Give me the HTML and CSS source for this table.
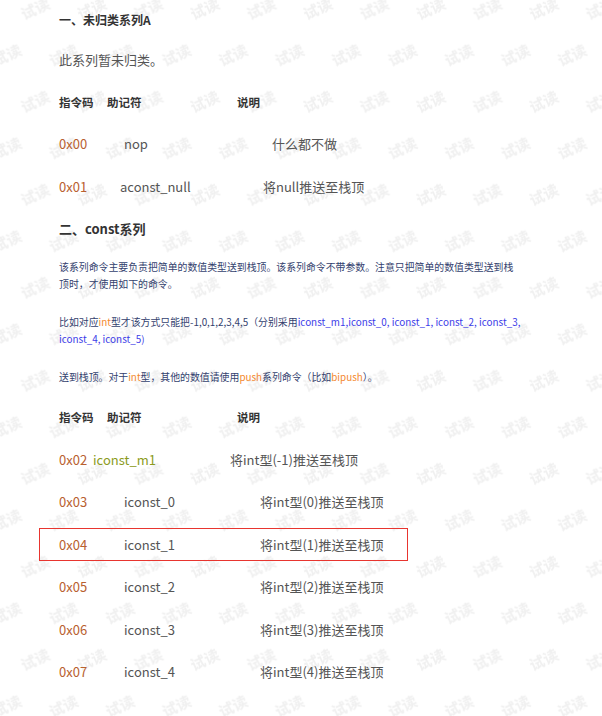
FILE: index.html
```html
<!DOCTYPE html>
<html lang="zh-CN">

<head>
    <meta charset="UTF-8">
    <meta name="viewport" content="width=device-width, initial-scale=1.0">
    <title>字节码指令 - const系列</title>
    <link rel="stylesheet" href="styles.css">
</head>

<body>
    <div class="page">
        <!-- 试读水印 -->
        <svg class="watermark" aria-hidden="true">
            <defs>
                <pattern id="wm" patternUnits="userSpaceOnUse" x="6.75" y="-15.25" width="56.5" height="93">
                    <text class="wm-text" x="28.25" y="23.25" transform="rotate(-25 28.25 23.25)">试读</text>
                    <text class="wm-text" x="0" y="69.75" transform="rotate(-25 0 69.75)">试读</text>
                    <text class="wm-text" x="56.5" y="69.75" transform="rotate(-25 56.5 69.75)">试读</text>
                </pattern>
            </defs>
            <rect width="100%" height="100%" fill="url(#wm)"></rect>
        </svg>

        <div class="doc">
            <h2 class="title first">一、未归类系列A</h2>
            <p class="line">此系列暂未归类。</p>

            <div class="table">
                <div class="row head">
                    <span class="h-code">指令码</span>
                    <span class="h-mnem">助记符</span>
                    <span>说明</span>
                </div>
                <div class="row r-nop">
                    <span class="code">0x00</span>
                    <span class="mnem">nop</span>
                    <span class="desc">什么都不做</span>
                </div>
                <div class="row r-null">
                    <span class="code">0x01</span>
                    <span class="mnem">aconst_null</span>
                    <span class="desc">将null推送至栈顶</span>
                </div>
            </div>

            <h2 class="title">二、const系列</h2>

            <div class="note">
                <p>该系列命令主要负责把简单的数值类型送到栈顶。该系列命令不带参数。注意只把简单的数值类型送到栈<br>顶时，才使用如下的命令。</p>
                <p>比如对应<span class="kw">int</span>型才该方式只能把-1,0,1,2,3,4,5（分别采用<span class="ref">iconst_m1,iconst_0, iconst_1, iconst_2, iconst_3,<br>iconst_4, iconst_5)</span></p>
                <p>送到栈顶。对于<span class="kw">int</span>型，其他的数值请使用<span class="kw">push</span>系列命令（比如<span class="kw">bipush</span>）。</p>
            </div>

            <div class="table loose">
                <div class="row head">
                    <span class="h-code">指令码</span>
                    <span class="h-mnem">助记符</span>
                    <span>说明</span>
                </div>
                <div class="row r-m1">
                    <span class="code">0x02</span>
                    <span class="mnem green">iconst_m1</span>
                    <span class="desc">将int型(-1)推送至栈顶</span>
                </div>
                <div class="row">
                    <span class="code">0x03</span>
                    <span class="mnem">iconst_0</span>
                    <span class="desc">将int型(0)推送至栈顶</span>
                </div>
                <div class="row marked">
                    <span class="code">0x04</span>
                    <span class="mnem">iconst_1</span>
                    <span class="desc">将int型(1)推送至栈顶</span>
                </div>
                <div class="row">
                    <span class="code">0x05</span>
                    <span class="mnem">iconst_2</span>
                    <span class="desc">将int型(2)推送至栈顶</span>
                </div>
                <div class="row">
                    <span class="code">0x06</span>
                    <span class="mnem">iconst_3</span>
                    <span class="desc">将int型(3)推送至栈顶</span>
                </div>
                <div class="row">
                    <span class="code">0x07</span>
                    <span class="mnem">iconst_4</span>
                    <span class="desc">将int型(4)推送至栈顶</span>
                </div>
            </div>
        </div>
    </div>
</body>

</html>
```

FILE: styles.css
```css
:root {
    --heading: #333333;
    --text: #555555;
    --code: #b8602f;
    --green: #8c9b1d;
    --navy: #33416e;
    --blue: #3c3ce8;
    --orange: #f4882e;
    --mark: #e8352f;
    --watermark: #f0f0f0;
}

body {
    margin: 0;
    padding: 0;
    background-color: #fff;
    font-family: 'Noto Sans CJK SC', 'Noto Sans', sans-serif;
}

.page {
    position: relative;
    width: 602px;
    min-height: 716px;
    overflow: hidden;
}

.watermark {
    position: absolute;
    top: 0;
    left: 0;
    width: 100%;
    height: 100%;
    z-index: 0;
}

.wm-text {
    font-family: 'Noto Sans CJK SC', sans-serif;
    font-size: 15px;
    font-weight: bold;
    fill: var(--watermark);
    text-anchor: middle;
    dominant-baseline: central;
}

.doc {
    position: relative;
    z-index: 1;
    padding-left: 59px;
}

.title {
    margin: 0;
    height: 42.2px;
    display: flex;
    align-items: center;
    font-size: 13px;
    font-weight: bold;
    color: var(--heading);
}

.title.first {
    height: 38.5px;
    font-size: 12px;
}

.line {
    margin: 0;
    height: 42.2px;
    display: flex;
    align-items: center;
    font-size: 13px;
    color: var(--text);
}

.row {
    height: 42.2px;
    display: flex;
    align-items: center;
    font-size: 13px;
    color: var(--text);
    white-space: nowrap;
}

.table.loose .row {
    height: 42.5px;
}

.row.head {
    font-size: 11.5px;
    font-weight: bold;
    color: var(--heading);
}

.h-code {
    width: 48px;
}

.h-mnem {
    width: 130px;
}

.code {
    width: 65px;
    color: var(--code);
}

.mnem {
    width: 136px;
}

.r-nop .mnem {
    width: 148px;
}

.r-null .code {
    width: 61px;
}

.r-null .mnem {
    width: 143px;
}

.r-m1 .code {
    width: 34px;
}

.r-m1 .mnem {
    width: 137px;
}

.green {
    color: var(--green);
}

.table.loose .row.marked {
    box-sizing: border-box;
    height: 33px;
    width: 369px;
    margin: 5px 0 4.5px -20px;
    padding-left: 19px;
    border: 1px solid var(--mark);
}

.note {
    padding-top: 9.5px;
    padding-bottom: 9.5px;
}

.note p {
    margin: 0 0 21px;
    font-size: 9.9px;
    line-height: 17px;
    color: var(--navy);
    white-space: nowrap;
}

.note p:last-child {
    margin-bottom: 0;
}

.kw {
    color: var(--orange);
}

.ref {
    color: var(--blue);
}
```
